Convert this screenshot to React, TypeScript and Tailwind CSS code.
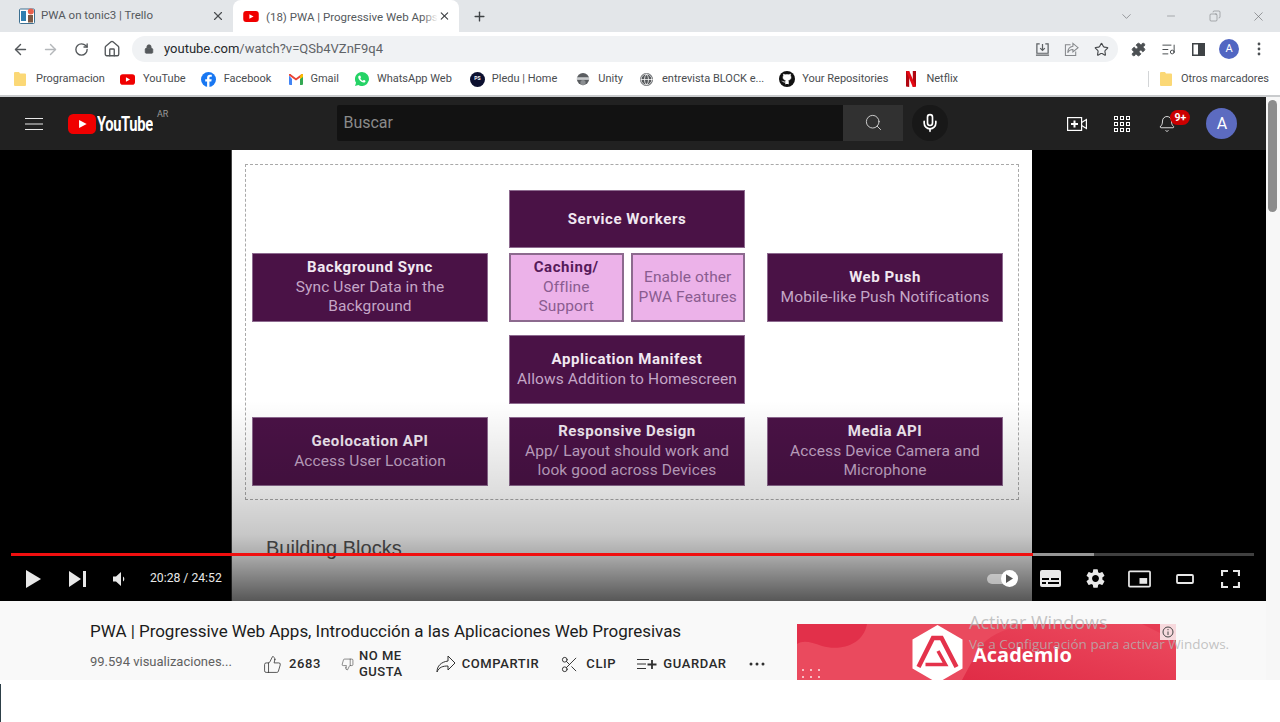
import React from "react";
import { ArrowLeft, ArrowRight, RotateCw, Home, Lock, Star, Puzzle, X, Plus, Minus, ChevronDown, Search, Mic, Bell, ThumbsUp, ThumbsDown, Scissors, Globe, Github, ListMusic, Copy } from "lucide-react";
import { MdSettings } from "react-icons/md";

const Yt = ({ className = "" }: { className?: string }) => (
  <svg viewBox="0 0 24 17" className={className}>
    <rect x="0" y="0" width="24" height="17" rx="4.5" fill="#f00000" />
    <path d="M9.5 5l6.5 3.5-6.5 3.5z" fill="#fff" />
  </svg>
);

const Folder = () => (
  <svg viewBox="0 0 12 14" className="w-[12px] h-[14px] shrink-0">
    <path d="M0 1a1 1 0 011-1h4l1 1.5h5a1 1 0 011 1V13a1 1 0 01-1 1H1a1 1 0 01-1-1z" fill="#fbd876" />
  </svg>
);

const Bookmark = ({ icon, label, className = "" }: { icon: React.ReactNode; label: string; className?: string }) => (
  <div className={`flex items-center shrink-0 ${className}`}>
    {icon}
    <span className="text-[11px] text-[#4a4d50] whitespace-nowrap">{label}</span>
  </div>
);

const Box = ({ title, lines, className = "" }: { title?: string; lines: string[]; className?: string }) => (
  <div className={`bg-[#4a1246] border border-[#8d6a8f] flex flex-col items-center justify-center text-center leading-[19.5px] ${className}`}>
    {title && <div className="font-bold text-[15px] tracking-[0.55px] text-[#f1e8f1]">{title}</div>}
    {lines.map((l) => (
      <div key={l} className="text-[15.5px] text-[#c4a6c6] whitespace-nowrap tracking-[0.1px]">{l}</div>
    ))}
  </div>
);

const Pink = ({ title, lines }: { title?: string; lines: string[] }) => (
  <div className="flex-1 bg-[#ecb2e9] border-2 border-[#8c6a8e] flex flex-col items-center justify-center text-center leading-[19.5px]">
    {title && <div className="font-bold text-[15px] tracking-[0.55px] text-[#561a5a]">{title}</div>}
    {lines.map((l) => (
      <div key={l} className="text-[15.5px] text-[#8a5c90] whitespace-nowrap tracking-[0.1px]">{l}</div>
    ))}
  </div>
);

const Action = ({ icon, label, className = "" }: { icon: React.ReactNode; label: string; className?: string }) => (
  <div className={`flex items-center shrink-0 ${className}`}>
    {icon}
    <span className="text-[13px] font-medium tracking-[0.6px] text-[#2a2a2a] whitespace-nowrap">{label}</span>
  </div>
);

export default function App() {
  return (
    <div className="w-[1280px] h-[722px] relative overflow-hidden bg-white flex flex-col font-['Roboto',sans-serif]">
      {/* Tab strip */}
      <div className="h-[32px] bg-[#e3e6e9] flex items-end shrink-0">
        <div className="w-[233px] h-full flex items-center pl-[19px] pr-[8px]">
          <svg viewBox="0 0 16 16" className="w-[16px] h-[16px] shrink-0">
            <rect x="0.5" y="1" width="15" height="14.5" rx="1" fill="#fff" stroke="#3c6f90" />
            <rect x="2" y="3" width="5" height="10" fill="#2f7fb0" />
            <rect x="9" y="7" width="5" height="7.5" fill="#7d5a45" />
            <circle cx="11.8" cy="3.6" r="3" fill="#e8604c" />
          </svg>
          <span className="ml-[6px] text-[11.5px] text-[#55595d] whitespace-nowrap">PWA on tonic3 | Trello</span>
          <X className="ml-auto w-[14px] h-[14px] mr-[0px] text-[#4a4d50]" strokeWidth={2} />
        </div>
        <div className="w-[226px] h-full bg-white rounded-t-[8px] flex items-center pl-[10px] pr-[8px]">
          <Yt className="w-[16px] h-[11px] shrink-0" />
          <div className="relative ml-[7px] w-[187px] overflow-hidden">
            <span className="text-[11.5px] text-[#55595d] whitespace-nowrap">(18) PWA | Progressive Web Apps</span>
            <div className="absolute inset-y-0 right-0 w-[16px] bg-linear-to-r from-transparent to-white" />
          </div>
          <X className="ml-auto w-[14px] h-[14px] text-[#3a3d40]" strokeWidth={2} />
        </div>
        <div className="h-full flex items-center ml-[13px]">
          <Plus className="w-[15px] h-[15px] text-[#3f4346]" strokeWidth={2.2} />
        </div>
        <div className="ml-auto h-full flex items-center pr-[14px] text-[#66696c]">
          <ChevronDown className="w-[15px] h-[15px] mr-[31px]" strokeWidth={1} />
          <Minus className="w-[12px] h-[12px] mr-[32px]" strokeWidth={1} />
          <Copy className="w-[12px] h-[12px] mr-[30px] -scale-x-100" strokeWidth={1} />
          <X className="w-[15px] h-[15px]" strokeWidth={1} />
        </div>
      </div>

      {/* Toolbar */}
      <div className="h-[32px] bg-white flex items-center shrink-0 pl-[12px] pr-[12px] pt-[2px]">
        <ArrowLeft className="w-[17px] h-[17px] text-[#54585b]" strokeWidth={2} />
        <ArrowRight className="w-[17px] h-[17px] ml-[13px] text-[#b4b7ba]" strokeWidth={2} />
        <RotateCw className="w-[15px] h-[15px] ml-[15px] text-[#54585b]" strokeWidth={2.2} />
        <Home className="w-[18px] h-[18px] ml-[14px] text-[#54585b]" strokeWidth={1.8} />
        <div className="ml-[11px] w-[986px] h-[26px] bg-[#f0f2f4] rounded-full flex items-center pl-[12px] pr-[9px]">
          <Lock className="w-[10px] h-[10px] text-[#55595c] fill-[#55595c]" strokeWidth={2} />
          <span className="ml-[10px] text-[13px] text-[#5f6367]"><span className="text-[#26282b]">youtube.com</span>/watch?v=QSb4VZnF9q4</span>
          <svg viewBox="0 0 16 16" className="ml-auto w-[15px] h-[15px] text-[#5c6063]" fill="none" stroke="currentColor" strokeWidth="1.3">
            <path d="M5 2H2v10h12V2h-3M8 2v7M5.5 6.5L8 9l2.5-2.5M1 14h14" />
          </svg>
          <svg viewBox="0 0 16 16" className="ml-[14px] w-[15px] h-[15px] text-[#85888b]" fill="none" stroke="currentColor" strokeWidth="1.1">
            <path d="M7 3H1.500v11.500h11V10M9.500 1.500L15 6l-5.500 4.500V8C7 8 5 9 4 11.500 4 7.500 6 5 9.500 4.500z" />
          </svg>
          <Star className="ml-[15px] w-[15px] h-[15px] text-[#45484b]" strokeWidth={1.8} />
        </div>
        <Puzzle className="ml-[13px] w-[15px] h-[15px] text-[#4c5053] fill-[#4c5053]" strokeWidth={1.5} />
        <ListMusic className="ml-[15px] w-[15px] h-[15px] text-[#4c5053]" strokeWidth={1.6} />
        <svg viewBox="0 0 13 13" className="ml-[16px] w-[13px] h-[13px] text-[#3f4346]" fill="currentColor">
          <path fillRule="evenodd" d="M0 0h13v13H0zM1.500 1.500v10H6v-10z" />
        </svg>
        <div className="ml-[14px] w-[20px] h-[20px] rounded-full bg-[#5166c2] text-white text-[11px] flex items-center justify-center">A</div>
        <svg viewBox="0 0 4 14" className="ml-[18px] w-[4px] h-[14px] text-[#4c5053]" fill="currentColor">
          <circle cx="2" cy="2" r="1.4" /><circle cx="2" cy="7" r="1.4" /><circle cx="2" cy="12" r="1.4" />
        </svg>
      </div>

      {/* Bookmarks */}
      <div className="h-[31px] bg-white flex items-center shrink-0 pl-[14px] pr-[11px] gap-[15px] pb-[1px]">
        <Bookmark icon={<span className="mr-[10px] flex"><Folder /></span>} label="Programacion" />
        <Bookmark icon={<Yt className="w-[15px] h-[11px] mr-[8px]" />} label="YouTube" />
        <Bookmark icon={<svg viewBox="0 0 16 16" className="w-[15px] h-[15px] mr-[8px]"><circle cx="8" cy="8" r="8" fill="#1877f2" /><path d="M9 16v-6h2l.4-2.4H9V6.2c0-.7.3-1.2 1.2-1.2h1.3V3a12 12 0 00-1.9-.2C7.700 2.800 6.500 4 6.500 6v1.600H4.500V10h2v6z" fill="#fff" /></svg>} label="Facebook" />
        <Bookmark className="ml-[3px]" icon={<svg viewBox="0 0 14 11" className="w-[14px] h-[11px] mr-[7px]"><path d="M0 1.500V10a1 1 0 001 1h2V5z" fill="#4285f4" /><path d="M14 1.500V10a1 1 0 01-1 1h-2V5z" fill="#34a853" /><path d="M0 1.500L7 6.500l7-5V1a1 1 0 00-2-.5L7 4.200 2 .5A1 1 0 000 1z" fill="#ea4335" /><path d="M11 2V5l3-2V1.500A1 1 0 0012 .5z" fill="#fbbc04" /></svg>} label="Gmail" />
        <Bookmark className="ml-[1px]" icon={<svg viewBox="0 0 16 16" className="w-[14px] h-[14px] mr-[8px]"><path d="M8 0a8 8 0 00-6.800 12.200L0 16l3.900-1.100A8 8 0 108 0z" fill="#25d366" /><path d="M5.500 4c1 0 1.400 2 1.200 2.500l-.6.8c.5 1.100 1.500 2.100 2.700 2.700l.8-.7c.5-.2 2.400.3 2.400 1.200 0 1-1.200 1.600-2 1.500-3-.3-6.100-3.300-6.300-6.300C3.600 5 4.500 4 5.500 4z" fill="#fff" /></svg>} label="WhatsApp Web" />
        <Bookmark className="ml-[3px]" icon={<span className="mr-[7px] w-[15px] h-[15px] rounded-full bg-[#0c1030] text-white text-[5px] font-bold flex items-center justify-center">PS</span>} label="Pledu | Home" />
        <Bookmark className="ml-[4px]" icon={<svg viewBox="0 0 16 16" className="w-[14px] h-[14px] mr-[8px]"><circle cx="8" cy="8" r="7" fill="#5a5d60" /><rect x="1" y="6" width="14" height="3" fill="#c8cacc" /><circle cx="8" cy="12" r="3" fill="#8a8d90" /></svg>} label="Unity" />
        <Bookmark className="ml-[2px]" icon={<span className="mr-[9px] w-[13px] h-[13px] rounded-full bg-[#55585b] flex items-center justify-center"><Globe className="w-[13px] h-[13px] text-white" strokeWidth={1.4} /></span>} label="entrevista BLOCK e..." />
        <Bookmark icon={<span className="mr-[7px] w-[16px] h-[16px] rounded-full bg-[#111] flex items-center justify-center"><Github className="w-[12px] h-[12px] text-white fill-white" strokeWidth={1} /></span>} label="Your Repositories" />
        <Bookmark className="ml-[2px]" icon={<svg viewBox="0 0 12 16" className="w-[12px] h-[16px] mr-[9px]"><path d="M1 0h3.200v16L1 15.500z" fill="#b1060f" /><path d="M7.800 0H11v15.500L7.800 16z" fill="#b1060f" /><path d="M1 0h3.200L11 15.500 7.800 16z" fill="#e50914" /></svg>} label="Netflix" />
        <div className="ml-auto flex items-center">
          <div className="w-[1px] h-[16px] bg-[#d3d5d7] mr-[11px]" />
          <Bookmark icon={<span className="mr-[9px] flex"><Folder /></span>} label="Otros marcadores" />
        </div>
      </div>
      <div className="h-[2px] bg-[#c9cbcd] shrink-0" />

      {/* Page */}
      <div className="flex flex-1 min-h-0">
        <div className="flex-1 flex flex-col min-w-0">
          <div className="w-[1266px] flex flex-col">
            {/* YT header */}
            <div className="h-[53px] bg-[#212121] flex items-center shrink-0 pl-[25px]">
              <svg viewBox="0 0 18 14" className="w-[18px] h-[14px] text-[#e8e8e8]" fill="none" stroke="currentColor" strokeWidth="1.2">
                <path d="M0 1.500h18M0 7h18M0 12.500h18" />
              </svg>
              <Yt className="ml-[25px] w-[28px] h-[20px]" />
              <span className="ml-[1px] w-[56px] text-[21px] leading-[22px] font-bold text-white whitespace-nowrap origin-left scale-x-[.7] tracking-[-0.5px]">YouTube</span>
              <span className="ml-[4px] -mt-[18px] text-[9px] text-[#9a9a9a]">AR</span>
              <div className="ml-[169px] mb-[2px] w-[506px] h-[36px] bg-[#121212] flex items-center pl-[6px] rounded-l-[2px]">
                <span className="text-[16px] text-[#8a8a8a]">Buscar</span>
              </div>
              <div className="mb-[2px] w-[60px] h-[36px] bg-[#313131] flex items-center justify-center">
                <Search className="w-[19px] h-[19px] text-[#e0e0e0]" strokeWidth={1.1} />
              </div>
              <div className="ml-[9px] mb-[2px] w-[36px] h-[36px] rounded-full bg-[#181818] flex items-center justify-center">
                <Mic className="w-[20px] h-[20px] text-white" strokeWidth={2} />
              </div>
              <svg viewBox="0 0 20 14" className="ml-[119px] w-[20px] h-[14px] text-white" fill="none" stroke="currentColor" strokeWidth="1.2">
                <rect x="0.600" y="0.600" width="14" height="12.800" />
                <path d="M14.600 5.500L19.400 2.500V11.500L14.600 8.500" />
                <path d="M7.500 3.500v7M4 7h7" strokeWidth="2" />
              </svg>
              <svg viewBox="0 0 16 16" className="ml-[27px] w-[16px] h-[16px] text-white" fill="none" stroke="currentColor" strokeWidth="1">
                {[0, 6, 12].map((y) => [0, 6, 12].map((x) => <rect key={`${x}${y}`} x={x + 0.5} y={y + 0.5} width="3" height="3" />))}
              </svg>
              <div className="ml-[28px] relative w-[18px] h-[20px] flex items-center">
                <Bell className="w-[20px] h-[20px] text-white" strokeWidth={1.1} />
                <span className="absolute left-[12px] -top-[4px] w-[20px] h-[15px] rounded-full bg-[#cc0000] text-white text-[10.5px] font-bold leading-[15px] text-center">9+</span>
              </div>
              <div className="ml-[30px] w-[31px] h-[31px] rounded-full bg-[#5c6bc0] text-white text-[16px] flex items-center justify-center">A</div>
            </div>

            {/* Video */}
            <div className="h-[451px] bg-black relative overflow-hidden shrink-0">
              <div className="ml-[231px] w-[801px] h-full bg-white pt-[14px] pl-[13px] border-l border-[#444]">
                <div className="w-[774px] h-[336px] border border-dashed border-[#a9a9a9] pt-[25px] pl-[6px]">
                  <div className="grid grid-cols-[236px_236px_237px] gap-x-[21px] grid-rows-[58px_5px_69px_13px_69px_13px_69px]">
                    <Box title="Service Workers" lines={[]} className="col-start-2 row-start-1 pt-[2px]" />
                    <Box title="Background Sync" lines={["Sync User Data in the", "Background"]} className="col-start-1 row-start-3" />
                    <div className="col-start-2 row-start-3 flex gap-[7px]">
                      <Pink title="Caching/" lines={["Offline", "Support"]} />
                      <Pink lines={["Enable other", "PWA Features"]} />
                    </div>
                    <Box title="Web Push" lines={["Mobile-like Push Notifications"]} className="col-start-3 row-start-3 ml-[1px]" />
                    <Box title="Application Manifest" lines={["Allows Addition to Homescreen"]} className="col-start-2 row-start-5" />
                    <Box title="Geolocation API" lines={["Access User Location"]} className="col-start-1 row-start-7" />
                    <Box title="Responsive Design" lines={["App/ Layout should work and", "look good across Devices"]} className="col-start-2 row-start-7" />
                    <Box title="Media API" lines={["Access Device Camera and", "Microphone"]} className="col-start-3 row-start-7 ml-[1px]" />
                  </div>
                </div>
                <div className="mt-[36px] ml-[21px] text-[20px] leading-[24px] text-[#555] font-['Liberation_Sans',sans-serif]">Building Blocks</div>
              </div>

              {/* Player overlay */}
              <div className="absolute inset-x-0 bottom-0 h-[200px] bg-[linear-gradient(to_top,rgba(0,0,0,.66),rgba(0,0,0,.34)_22%,rgba(0,0,0,.22)_33%,rgba(0,0,0,.13)_55%,rgba(0,0,0,0)_100%)] flex flex-col justify-end">
                <div className="ml-[11px] mr-[12px] h-[3px] bg-white/25 relative">
                  <div className="absolute inset-y-0 left-0 w-[1083px] bg-white/45" />
                  <div className="absolute inset-y-0 left-0 w-[1022px] bg-[#f00f0f]" />
                </div>
                <div className="h-[45px] flex items-center pl-[26px] text-[#e8e8e8]">
                  <svg viewBox="0 0 15 18" className="w-[15px] h-[18px]" fill="currentColor"><path d="M0 0l15 9L0 18z" /></svg>
                  <svg viewBox="0 0 17 16" className="ml-[28px] w-[17px] h-[16px]" fill="currentColor"><path d="M0 0l12 8-12 8zM14 0h3v16h-3z" /></svg>
                  <svg viewBox="0 0 14 14" className="ml-[27px] w-[14px] h-[14px]" fill="currentColor"><path d="M0 4.500h3L8 0v14L3 9.500H0zM10 4.500a3 3 0 010 5z" /></svg>
                  <span className="ml-[23px] w-[74px] text-[12.2px] whitespace-nowrap">20:28 / 24:52</span>
                  <div className="ml-[763px] relative w-[31px] h-[14px] flex items-center">
                    <div className="w-[28px] h-[10px] rounded-full bg-white/50" />
                    <div className="absolute right-0 w-[17px] h-[17px] rounded-full bg-white flex items-center justify-center">
                      <svg viewBox="0 0 8 10" className="w-[7px] h-[9px] text-[#555]" fill="currentColor"><path d="M0 0l8 5-8 5z" /></svg>
                    </div>
                  </div>
                  <svg viewBox="0 0 21 17" className="ml-[22px] w-[21px] h-[17px]" fill="currentColor"><path fillRule="evenodd" d="M2 0h17a2 2 0 012 2v13a2 2 0 01-2 2H2a2 2 0 01-2-2V2a2 2 0 012-2zM2 8v2h7V8zm9 0v2h8V8zM2 12v2h4v-2zm6 0v2h11v-2z" /></svg>
                  <MdSettings className="ml-[23px] w-[23px] h-[23px] text-[#e8e8e8]" />
                  <svg viewBox="0 0 24 18" className="ml-[21px] w-[23px] h-[18px]" fill="none" stroke="currentColor" strokeWidth="1.8"><rect x="1" y="1" width="22" height="16" rx="1" /><rect x="12" y="8" width="8" height="6" fill="currentColor" stroke="none" /></svg>
                  <svg viewBox="0 0 18 10" className="ml-[25px] w-[18px] h-[10px]" fill="none" stroke="currentColor" strokeWidth="1.800"><rect x="1" y="1" width="16" height="8" rx="1" /></svg>
                  <svg viewBox="0 0 19 18" className="ml-[27px] w-[19px] h-[18px]" fill="none" stroke="currentColor" strokeWidth="2.200"><path d="M1 6V1h6M12 1h6v5M18 12v5h-6M7 17H1v-5" /></svg>
                </div>
              </div>
            </div>

            {/* Info */}
            <div className="h-[79px] bg-[#f9f9f9] flex overflow-hidden shrink-0 pl-[90px]">
              <div className="w-[707px] shrink-0">
                <div className="mt-[18px] text-[17px] leading-[24px] tracking-[-0.03px] text-[#1c1c1c] whitespace-nowrap">PWA | Progressive Web Apps, Introducción a las Aplicaciones Web Progresivas</div>
                <div className="flex items-center h-[36px] mt-[3px]">
                  <span className="w-[173px] shrink-0 text-[13px] text-[#606060] whitespace-nowrap mb-[4px]">99.594 visualizaciones...</span>
                  <Action icon={<ThumbsUp className="w-[19px] h-[19px] mr-[7px] text-[#303030]" strokeWidth={1} />} label="2683" />
                  <div className="ml-[20px] flex items-center shrink-0">
                    <ThumbsDown className="w-[13px] h-[13px] mr-[5px] text-[#303030]" strokeWidth={1} />
                    <span className="text-[13px] font-medium leading-[16px] tracking-[0.5px] text-[#2a2a2a]">NO ME<br />GUSTA</span>
                  </div>
                  <Action className="ml-[33px]" icon={
                    <svg viewBox="0 0 20 18" className="w-[20px] h-[18px] mr-[6px] text-[#303030]" fill="none" stroke="currentColor" strokeWidth="1"><path d="M12 1l7 7-7 7v-4C7 11 3 12 1 17c0-6 4-10 11-11z" /></svg>
                  } label="COMPARTIR" />
                  <Action className="ml-[21px]" icon={<Scissors className="w-[19px] h-[19px] mr-[7px] text-[#303030]" strokeWidth={1.2} />} label="CLIP" />
                  <Action className="ml-[21px]" icon={
                    <svg viewBox="0 0 20 12" className="w-[20px] h-[12px] mr-[6px] text-[#303030]" fill="none" stroke="currentColor"><path d="M0 1.500h12M0 6h9M0 10.500h9" strokeWidth="1" /><path d="M15 2v9M10.500 6.500h9" strokeWidth="1.800" /></svg>
                  } label="GUARDAR" />
                  <svg viewBox="0 0 16 4" className="ml-[22px] w-[16px] h-[4px] text-[#303030]" fill="currentColor"><circle cx="2" cy="2" r="1.500" /><circle cx="8" cy="2" r="1.500" /><circle cx="14" cy="2" r="1.500" /></svg>
                </div>
              </div>
              {/* Ad */}
              <div className="mt-[23px] w-[379px] h-[56px] bg-[#ea4a5e] relative overflow-hidden shrink-0 flex items-center">
                <svg viewBox="0 0 379 56" className="absolute inset-0 w-[379px] h-[56px]">
                  <defs>
                    <linearGradient id="adg" x1="0" y1="1" x2="1" y2="0">
                      <stop offset="0" stopColor="#e02c46" />
                      <stop offset="1" stopColor="#ec4c60" />
                    </linearGradient>
                  </defs>
                  <path d="M0 0h70c-4 22-28 27-45 22C14 18 6 16 0 20z" fill="#e2304a" />
                  <path d="M165 56L180 28Q190 8 230 0H379V56z" fill="url(#adg)" />
                  <path d="M345 0l20 10 14-10z" fill="#e2304a" opacity=".5" />
                  {[6, 14, 22].flatMap((x) => [46, 53].map((y) => <circle key={`${x}-${y}`} cx={x} cy={y} r="1" fill="#fff" opacity=".85" />))}
                </svg>
                <svg viewBox="0 0 50 58" className="relative ml-[115px] mt-[3px] w-[51px] h-[58px] shrink-0">
                  <path d="M25 0l25 14.500v29L25 58 0 43.500v-29z" fill="#fff" />
                  <path d="M6 42L20.500 13H29L44 42" fill="none" stroke="#e4324b" strokeWidth="4.500" />
                  <path d="M13 39.500H33L25.500 26" fill="none" stroke="#e4324b" strokeWidth="3.500" />
                </svg>
                <span className="relative ml-[10px] mt-[6px] text-[20px] font-bold text-white font-['Open_Sans',sans-serif]">Academlo</span>
                <div className="absolute top-0 right-0 w-[16px] h-[16px] bg-[#f7d9dd] flex items-center justify-center">
                  <svg viewBox="0 0 12 12" className="w-[12px] h-[12px] text-[#444]" fill="none" stroke="currentColor"><circle cx="6" cy="6" r="5" /><path d="M6 5.500V9M6 3v1.200" /></svg>
                </div>
              </div>
            </div>
          </div>
          {/* Bottom */}
          <div className="flex-1 pt-[4px]">
            <div className="w-[1px] h-full bg-[#2d3f48]" />
          </div>
        </div>

        {/* Scrollbar */}
        <div className="w-[14px] h-[583px] bg-[#f7f7f7] pt-[3px] pl-[2px] shrink-0">
          <div className="w-[9px] h-[112px] rounded-full bg-[#8c8c8c]" />
        </div>
      </div>

      {/* Windows watermark */}
      <div className="absolute left-[969px] top-[610px] text-[#b4b4b4]/80 font-['Open_Sans',sans-serif] pointer-events-none">
        <div className="text-[18px] leading-[24px]">Activar Windows</div>
        <div className="text-[13.5px] leading-[18px] mt-[1px]">Ve a Configuración para activar Windows.</div>
      </div>
    </div>
  );
}
